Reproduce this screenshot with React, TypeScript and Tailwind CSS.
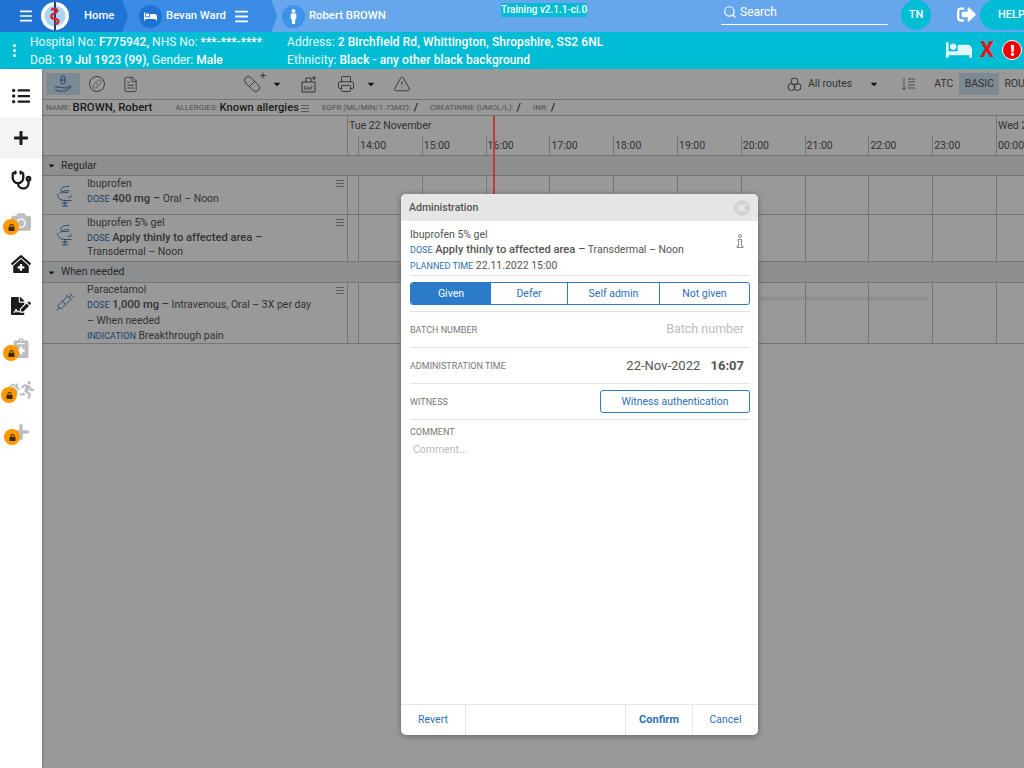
import { Menu, Search, Stethoscope, Pill, FileText, Printer, TriangleAlert, Syringe } from "lucide-react";
import {
  FaBed, FaListUl, FaPlus, FaCamera, FaClinicMedical, FaFileSignature, FaNotesMedical, FaHome, FaRunning,
  FaLock, FaSignOutAlt, FaExclamation, FaMale, FaCaretDown, FaTimesCircle,
} from "react-icons/fa";

const hours = ["14:00", "15:00", "16:00", "17:00", "18:00", "19:00", "20:00", "21:00", "22:00", "23:00", "00:00"];

function Snake() {
  return (
    <svg width="18" height="22" viewBox="0 0 18 22" fill="none" stroke="#2f6fb5" strokeWidth="0.9" className="shrink-0">
      <path d="M13 1.500C8 1 5 3 5 5s3 3 6 2.500 2.500-2 .5-2S6 7 3.500 8.500" />
      <path d="M1.500 9c0 4 3 6.500 7.500 6.500h6.500M9 15.500V21M6 21h6M6 18h6" />
      <path d="M16 10c0 1.500-2 2.500-4 2.500" />
    </svg>
  );
}

function Bars() {
  return (
    <span className="flex w-[8px] flex-col gap-[2px]">
      <span className="h-px bg-[#999]" />
      <span className="h-px bg-[#999]" />
      <span className="h-px bg-[#999]" />
    </span>
  );
}

function Caret({ className }: { className: string }) {
  return <FaCaretDown size={10} className={className} />;
}

function Locked({ children, offset }: { children: React.ReactNode; offset: string }) {
  return (
    <div className="relative flex h-[42px] w-[42px] items-center justify-center text-[#bdbdbd]">
      {children}
      <span className={`absolute flex h-4 w-4 items-center justify-center rounded-full bg-[#ff9800] text-[#3a2a00] ${offset}`}>
        <FaLock size={7} />
      </span>
    </div>
  );
}

function TimeCells() {
  return (
    <div className="flex flex-1">
      <div className="w-[10px] shrink-0" />
      {hours.map((h) => (
        <div key={h} className="w-[63.8px] shrink-0 border-l border-[#c4c4c4]" />
      ))}
    </div>
  );
}

function Band({ label }: { label: string }) {
  return (
    <div className="flex h-full items-center gap-[5px] border-b border-[#c4c4c4] bg-[#eaedee] pl-[5px] text-[10.5px] text-[#444]">
      <FaCaretDown size={9} className="text-[#222]" />
      {label}
    </div>
  );
}

function MedRow({ height, pad, icon, children }: { height: string; pad: string; icon: React.ReactNode; children: React.ReactNode }) {
  return (
    <div className={`flex border-b border-[#c4c4c4] ${height}`}>
      <div className="flex w-[306px] shrink-0 border-r border-[#c4c4c4]">
        <div className="flex w-[45px] shrink-0 justify-center pt-[9px]">{icon}</div>
        <div className={`flex-1 text-[10.5px] text-[#555] ${pad}`}>{children}</div>
        <div className="pr-[3px] pt-[4px]">
          <Bars />
        </div>
      </div>
      <TimeCells />
    </div>
  );
}

function Blue({ children }: { children: React.ReactNode }) {
  return <span className="text-[9px] text-[#2f6fb5]">{children}</span>;
}

function Dose({ children }: { children: React.ReactNode }) {
  return <b className="text-[11.2px] font-medium">{children}</b>;
}

function Small({ children }: { children: React.ReactNode }) {
  return <span className="text-[8px] uppercase text-[#888]">{children}</span>;
}

export default function App() {
  return (
    <div className="flex h-[768px] w-[1024px] flex-col overflow-hidden bg-white font-['Roboto',sans-serif]">
      {/* top bar */}
      <header className="flex h-8 shrink-0 bg-[#65a6ec] text-white">
        <div className="relative z-20 flex w-[128px] shrink-0 items-center bg-[#1f73d3] pl-[18px] [clip-path:polygon(0_0,122px_0,128px_16px,122px_32px,0_32px)]">
          <Menu size={16} strokeWidth={2.5} />
          <svg width="30" height="30" viewBox="0 0 30 30" className="ml-[6px] shrink-0">
            <circle cx="15" cy="15" r="14" fill="#ffffff" />
            <circle cx="15" cy="15" r="10.5" fill="#a9d7ee" />
            <path d="M15 1v28" stroke="#24406f" strokeWidth="2" />
            <path d="M11 9c5-3 9 1 4 3s-5 5 0 6 4 4 0 5" fill="none" stroke="#d5263a" strokeWidth="2.4" />
          </svg>
          <span className="ml-[14px] text-[11.3px] font-medium">Home</span>
        </div>
        <div className="relative z-10 -ml-[6px] flex w-[155px] shrink-0 items-center bg-[#3a8be6] pl-[15px] [clip-path:polygon(0_0,149px_0,155px_16px,149px_32px,0_32px)]">
          <span className="ml-[2px] flex h-[23px] w-[23px] items-center justify-center rounded-full bg-[#1f73d3]">
            <FaBed size={13} />
          </span>
          <span className="ml-[4px] text-[11.3px] font-medium">Bevan Ward</span>
          <Menu size={17} strokeWidth={2.5} className="ml-[7px]" />
        </div>
        <div className="ml-[5px] flex w-[219px] shrink-0 items-center">
          <span className="flex h-[23px] w-[23px] items-center justify-center rounded-full bg-[#3f92ea]">
            <FaMale size={15} />
          </span>
          <span className="ml-[4px] text-[11.3px] font-medium">Robert BROWN</span>
        </div>
        <div className="w-[220px] shrink-0 pt-[3px]">
          <span className="block w-fit bg-[#00bcd4] text-[10px] leading-[14px] font-medium">Training v2.1.1-ci.0</span>
        </div>
        <div className="flex h-[25px] w-[167px] shrink-0 items-center gap-[3px] border-b border-white pb-[1px] text-[12px]">
          <Search size={14} strokeWidth={2} className="ml-[2px]" />
          Search
        </div>
        <div className="ml-[13px] flex h-[30px] w-[30px] shrink-0 items-center justify-center rounded-full bg-[#00bcd4] text-[11px] font-medium">
          TN
        </div>
        <FaSignOutAlt size={19} className="ml-[26px] mt-[5px] shrink-0" />
        <div className="ml-[4px] flex h-[30px] w-[80px] shrink-0 items-center rounded-full bg-[#00bcd4] pl-[18px] text-[11px] font-medium">
          HELP
        </div>
      </header>

      {/* patient banner */}
      <section className="flex h-[37px] shrink-0 items-center bg-[#00bcd4] text-[12px] leading-[18px] text-[#e8fbfd]">
        <div className="flex w-[30px] shrink-0 flex-col items-center gap-[2px] pr-[2px]">
          <span className="h-[3px] w-[3px] rounded-full bg-white" />
          <span className="h-[3px] w-[3px] rounded-full bg-white" />
          <span className="h-[3px] w-[3px] rounded-full bg-white" />
        </div>
        <div className="w-[257px] shrink-0">
          <div>
            Hospital No: <b className="font-medium text-white">F775942,</b> NHS No: <b className="font-medium text-white">***-***-****</b>
          </div>
          <div>
            DoB: <b className="font-medium text-white">19 Jul 1923 (99),</b> Gender: <b className="font-medium text-white">Male</b>
          </div>
        </div>
        <div className="flex-1 tracking-[0.08px]">
          <div>
            Address: <b className="font-medium text-white">2 Birchfield Rd, Whittington, Shropshire, SS2 6NL</b>
          </div>
          <div>
            Ethnicity: <b className="font-medium text-white">Black - any other black background</b>
          </div>
        </div>
        <div className="flex items-center pb-[1px] pr-[2px]">
          <FaBed size={26} className="text-[#dff6fa]" />
          <span className="ml-[8px] text-[22px] leading-none font-bold text-[#e8141c]">X</span>
          <span className="ml-[8px] flex h-5 w-5 items-center justify-center rounded-full border border-white bg-[#f00000] text-white">
            <FaExclamation size={11} />
          </span>
        </div>
      </section>

      <div className="relative flex min-h-0 flex-1">
        {/* left icon rail */}
        <nav className="z-10 flex w-[42px] shrink-0 flex-col bg-white text-[#1b1b1b] shadow-[1px_0_2px_rgba(0,0,0,0.2)]">
          <div className="flex h-[48px] items-center justify-center pt-[6px]">
            <FaListUl size={18} />
          </div>
          <div className="flex h-[42px] items-center justify-center bg-[#f4f4f4]">
            <FaPlus size={16} />
          </div>
          <div className="flex h-[42px] items-center justify-center">
            <Stethoscope size={21} strokeWidth={2.6} />
          </div>
          <Locked offset="left-[3px] top-[18px]">
            <FaCamera size={20} />
          </Locked>
          <div className="flex h-[42px] items-center justify-center">
            <FaClinicMedical size={20} />
          </div>
          <div className="flex h-[42px] items-center justify-center">
            <FaFileSignature size={20} />
          </div>
          <Locked offset="left-[3px] top-[18px]">
            <FaNotesMedical size={20} />
          </Locked>
          <Locked offset="left-[1px] top-[18px]">
            <FaHome size={14} className="-mr-[2px] mt-[-2px]" />
            <FaRunning size={18} className="mt-[-1px]" />
          </Locked>
          <Locked offset="left-[4px] top-[18px]">
            <FaPlus size={18} />
          </Locked>
        </nav>

        {/* drug chart, sits under the modal overlay */}
        <main className="relative min-w-0 flex-1 overflow-hidden bg-white">
          <div className="flex h-[31px] items-center border-b border-[#c4c4c4] text-[#555] [&>*]:shrink-0">
            <div className="ml-[4px] flex h-[22px] w-[34px] items-center justify-center bg-[#cfe6f5] text-[#2f6fb5]">
              <svg width="18" height="18" viewBox="0 0 18 18" fill="none" stroke="currentColor" strokeWidth="1">
                <rect x="7" y="1" width="4" height="8" rx="2" />
                <path d="M7 5h4M1 12h4c2 0 3 1 5 1h2l4-2c1 0 1 1 0 2l-5 3H5l-4-1" />
              </svg>
            </div>
            <div className="ml-[9px] flex h-[16px] w-[16px] items-center justify-center rounded-full border border-[#666]">
              <Pill size={10} strokeWidth={1.2} />
            </div>
            <FileText size={17} strokeWidth={1.2} className="ml-[17px]" />
            <span className="relative ml-[104px]">
              <Pill size={18} strokeWidth={1.2} className="rotate-90" />
              <span className="absolute -right-[5px] -top-[5px] text-[11px] leading-none">+</span>
            </span>
            <Caret className="ml-[11px] text-[#222]" />
            <svg width="18" height="18" viewBox="0 0 18 18" fill="none" stroke="currentColor" strokeWidth="1" className="ml-[18px]">
              <path d="M2 7h13v10H2zM6 7V3h5v4M14 1v4M12 3h4" />
              <text x="3.500" y="14.500" fontSize="6" fill="currentColor" stroke="none">Ref</text>
            </svg>
            <Printer size={18} strokeWidth={1.2} className="ml-[19px]" />
            <Caret className="ml-[11px] text-[#222]" />
            <TriangleAlert size={18} strokeWidth={1.2} className="ml-[17px]" />
            <svg width="15" height="15" viewBox="0 0 15 15" fill="none" stroke="currentColor" strokeWidth="1" className="ml-[376px]">
              <circle cx="7.500" cy="4.500" r="3.500" />
              <circle cx="4.500" cy="10" r="3.500" />
              <circle cx="10.500" cy="10" r="3.500" />
            </svg>
            <span className="ml-[6px] text-[10.5px] whitespace-nowrap">All routes</span>
            <Caret className="ml-[17px] text-[#222]" />
            <svg width="15" height="14" viewBox="0 0 15 14" fill="none" stroke="#888" strokeWidth="1" className="ml-[22px]">
              <path d="M3 1v12M1 10.500 3 13l2-2.500M7 2h7M7 5h7M7 8h7M7 11h7" />
            </svg>
            <span className="ml-[18px] text-[10.5px]">ATC</span>
            <span className="ml-[6px] flex h-[22px] w-[40px] items-center justify-center bg-[#cfe6f5] text-[10.5px]">BASIC</span>
            <span className="ml-[5px] text-[10.5px]">ROUTE</span>
          </div>

          <div className="flex h-[16px] items-center border-b border-[#c4c4c4] pl-[4px] pt-[1px] whitespace-nowrap text-[#333]">
            <Small>Name:</Small>
            <b className="ml-[2px] text-[11.4px] font-medium">BROWN, Robert</b>
            <span className="ml-[23px]" />
            <Small>Allergies:</Small>
            <b className="ml-[2px] text-[11.2px] font-medium">Known allergies</b>
            <span className="ml-[2px]">
              <Bars />
            </span>
            <span className="ml-[13px]" />
            <Small>eGFR (mL/min/1.73m2):</Small>
            <b className="ml-[3px] text-[11.4px] font-medium">/</b>
            <span className="ml-[12px]" />
            <Small>Creatinine (umol/L):</Small>
            <b className="ml-[3px] text-[11.4px] font-medium">/</b>
            <span className="ml-[12px]" />
            <Small>INR:</Small>
            <b className="ml-[3px] text-[11.4px] font-medium">/</b>
          </div>

          <div className="flex h-[40px] border-b border-[#c4c4c4] text-[10.5px] text-[#555]">
            <div className="w-[306px] shrink-0 border-r border-[#c4c4c4]" />
            <div className="flex flex-1 flex-col">
              <div className="h-[20px] pl-[1px] pt-[2px]">Tue 22 November</div>
              <div className="flex h-[20px]">
                <div className="w-[10px] shrink-0" />
                {hours.map((h) => (
                  <div key={h} className="w-[63.8px] shrink-0 border-l border-[#c4c4c4] pl-[1px] pt-[2px]">
                    {h}
                  </div>
                ))}
              </div>
            </div>
          </div>
          {/* the second date label crosses into the time header */}
          <div className="absolute left-[954px] top-[47px] h-[40px] w-[40px] border-l border-[#c4c4c4] pl-[1px] pt-[2px] text-[10.5px] whitespace-nowrap text-[#555]">
            Wed 23
          </div>

          <div className="h-[20px]">
            <Band label="Regular" />
          </div>
          <MedRow height="h-[39px]" pad="pt-[1px] leading-[14.6px]" icon={<Snake />}>
            <div>Ibuprofen</div>
            <div>
              <Blue>DOSE</Blue> <Dose>400 mg –</Dose> Oral – Noon
            </div>
          </MedRow>
          <MedRow height="h-[47px]" pad="pt-[1px] leading-[14.6px]" icon={<Snake />}>
            <div>Ibuprofen 5% gel</div>
            <div>
              <Blue>DOSE</Blue> <Dose>Apply thinly to affected area –</Dose>
            </div>
            <div>Transdermal – Noon</div>
          </MedRow>
          <div className="h-[21px]">
            <Band label="When needed" />
          </div>
          <MedRow height="h-[61px]" pad="-mt-px leading-[15px]" icon={<Syringe size={20} strokeWidth={1} className="text-[#2f6fb5]" />}>
            <div>Paracetamol</div>
            <div>
              <Blue>DOSE</Blue> <Dose>1,000 mg –</Dose> Intravenous, Oral – 3X per day
            </div>
            <div>– When needed</div>
            <div>
              <Blue>INDICATION</Blue> Breakthrough pain
            </div>
          </MedRow>

          <div className="absolute left-[360px] top-[228px] h-[3px] w-[526px] border-y border-dotted border-[#c4c4c4]" />
          <div className="absolute inset-0 bg-black/40" />
          <div className="absolute left-[451px] top-[47px] h-[228px] w-[1.5px] bg-[#c43a36]" />
        </main>

        {/* administration modal */}
        <div className="absolute left-[401px] top-[125px] z-20 flex h-[541px] w-[357px] flex-col overflow-hidden rounded-[5px] bg-white text-[#555] shadow-[0_1px_6px_rgba(0,0,0,0.35)]">
          <div className="flex h-[27px] shrink-0 items-center justify-between bg-[#e6e6e6] px-[8px] pt-px">
            <span className="text-[10.5px] font-medium">Administration</span>
            <FaTimesCircle size={16} className="text-[#d2d2d2]" />
          </div>
          <div className="flex flex-1 flex-col pl-[9px] pr-[8px]">
            <div className="flex h-[55px] shrink-0 border-b border-[#e2e2e2] pt-[6px] text-[10.5px] leading-[15px]">
              <div className="flex-1">
                <div>Ibuprofen 5% gel</div>
                <div>
                  <Blue>DOSE</Blue> <Dose>Apply thinly to affected area –</Dose> Transdermal – Noon
                </div>
                <div>
                  <Blue>PLANNED TIME</Blue> 22.11.2022 15:00
                </div>
              </div>
              <svg width="8" height="14" viewBox="0 0 8 14" fill="none" stroke="#888" strokeWidth="1" className="mr-[6px] mt-[7px]">
                <circle cx="4" cy="2" r="1.500" />
                <path d="M2 5.500h3.500V12H7v1.500H1V12h1.500V7H2z" />
              </svg>
            </div>
            <div className="flex h-[36px] shrink-0 items-center border-b border-[#e2e2e2]">
              <div className="flex h-[23px] w-[340px] overflow-hidden rounded-[3px] border border-[#2b7bcb] text-[10.5px] text-[#2f6fb5]">
                <div className="flex w-[80px] items-center justify-center bg-[#2b7bcb] pt-px text-white">Given</div>
                <div className="flex w-[77px] items-center justify-center border-r border-[#2b7bcb] pt-px">Defer</div>
                <div className="flex w-[92px] items-center justify-center border-r border-[#2b7bcb] pt-px">Self admin</div>
                <div className="flex flex-1 items-center justify-center pt-px">Not given</div>
              </div>
            </div>
            <div className="flex h-[36px] shrink-0 items-center justify-between border-b border-[#e2e2e2] pr-[6px]">
              <span className="pt-[2px] text-[9px] text-[#777]">BATCH NUMBER</span>
              <span className="text-[12.5px] text-[#bbb]">Batch number</span>
            </div>
            <div className="flex h-[36px] shrink-0 items-center justify-between border-b border-[#e2e2e2] pr-[6px]">
              <span className="pt-[2px] text-[9px] text-[#777]">ADMINISTRATION TIME</span>
              <span className="text-[13px]">
                22-Nov-2022 <b className="ml-[7px] font-bold">16:07</b>
              </span>
            </div>
            <div className="flex h-[36px] shrink-0 items-center justify-between border-b border-[#e2e2e2]">
              <span className="pt-[2px] text-[9px] text-[#777]">WITNESS</span>
              <div className="flex h-[23px] w-[150px] items-center justify-center rounded-[3px] border border-[#2b7bcb] pt-px text-[10.5px] text-[#2f6fb5]">
                Witness authentication
              </div>
            </div>
            <div className="pt-[6px] text-[9px] text-[#777]">COMMENT</div>
            <div className="pl-[3px] pt-[2px] text-[10.5px] text-[#bbb]">Comment...</div>
          </div>
          <div className="flex h-[31px] shrink-0 border-t border-[#e6e6e6] text-[10.5px] text-[#2f6fb5]">
            <div className="flex w-[65px] items-center justify-center border-r border-[#e6e6e6]">Revert</div>
            <div className="flex-1" />
            <div className="flex w-[68px] items-center justify-center border-x border-[#e6e6e6] text-[11px] font-bold">Confirm</div>
            <div className="flex w-[65px] items-center justify-center">Cancel</div>
          </div>
        </div>
      </div>
    </div>
  );
}
